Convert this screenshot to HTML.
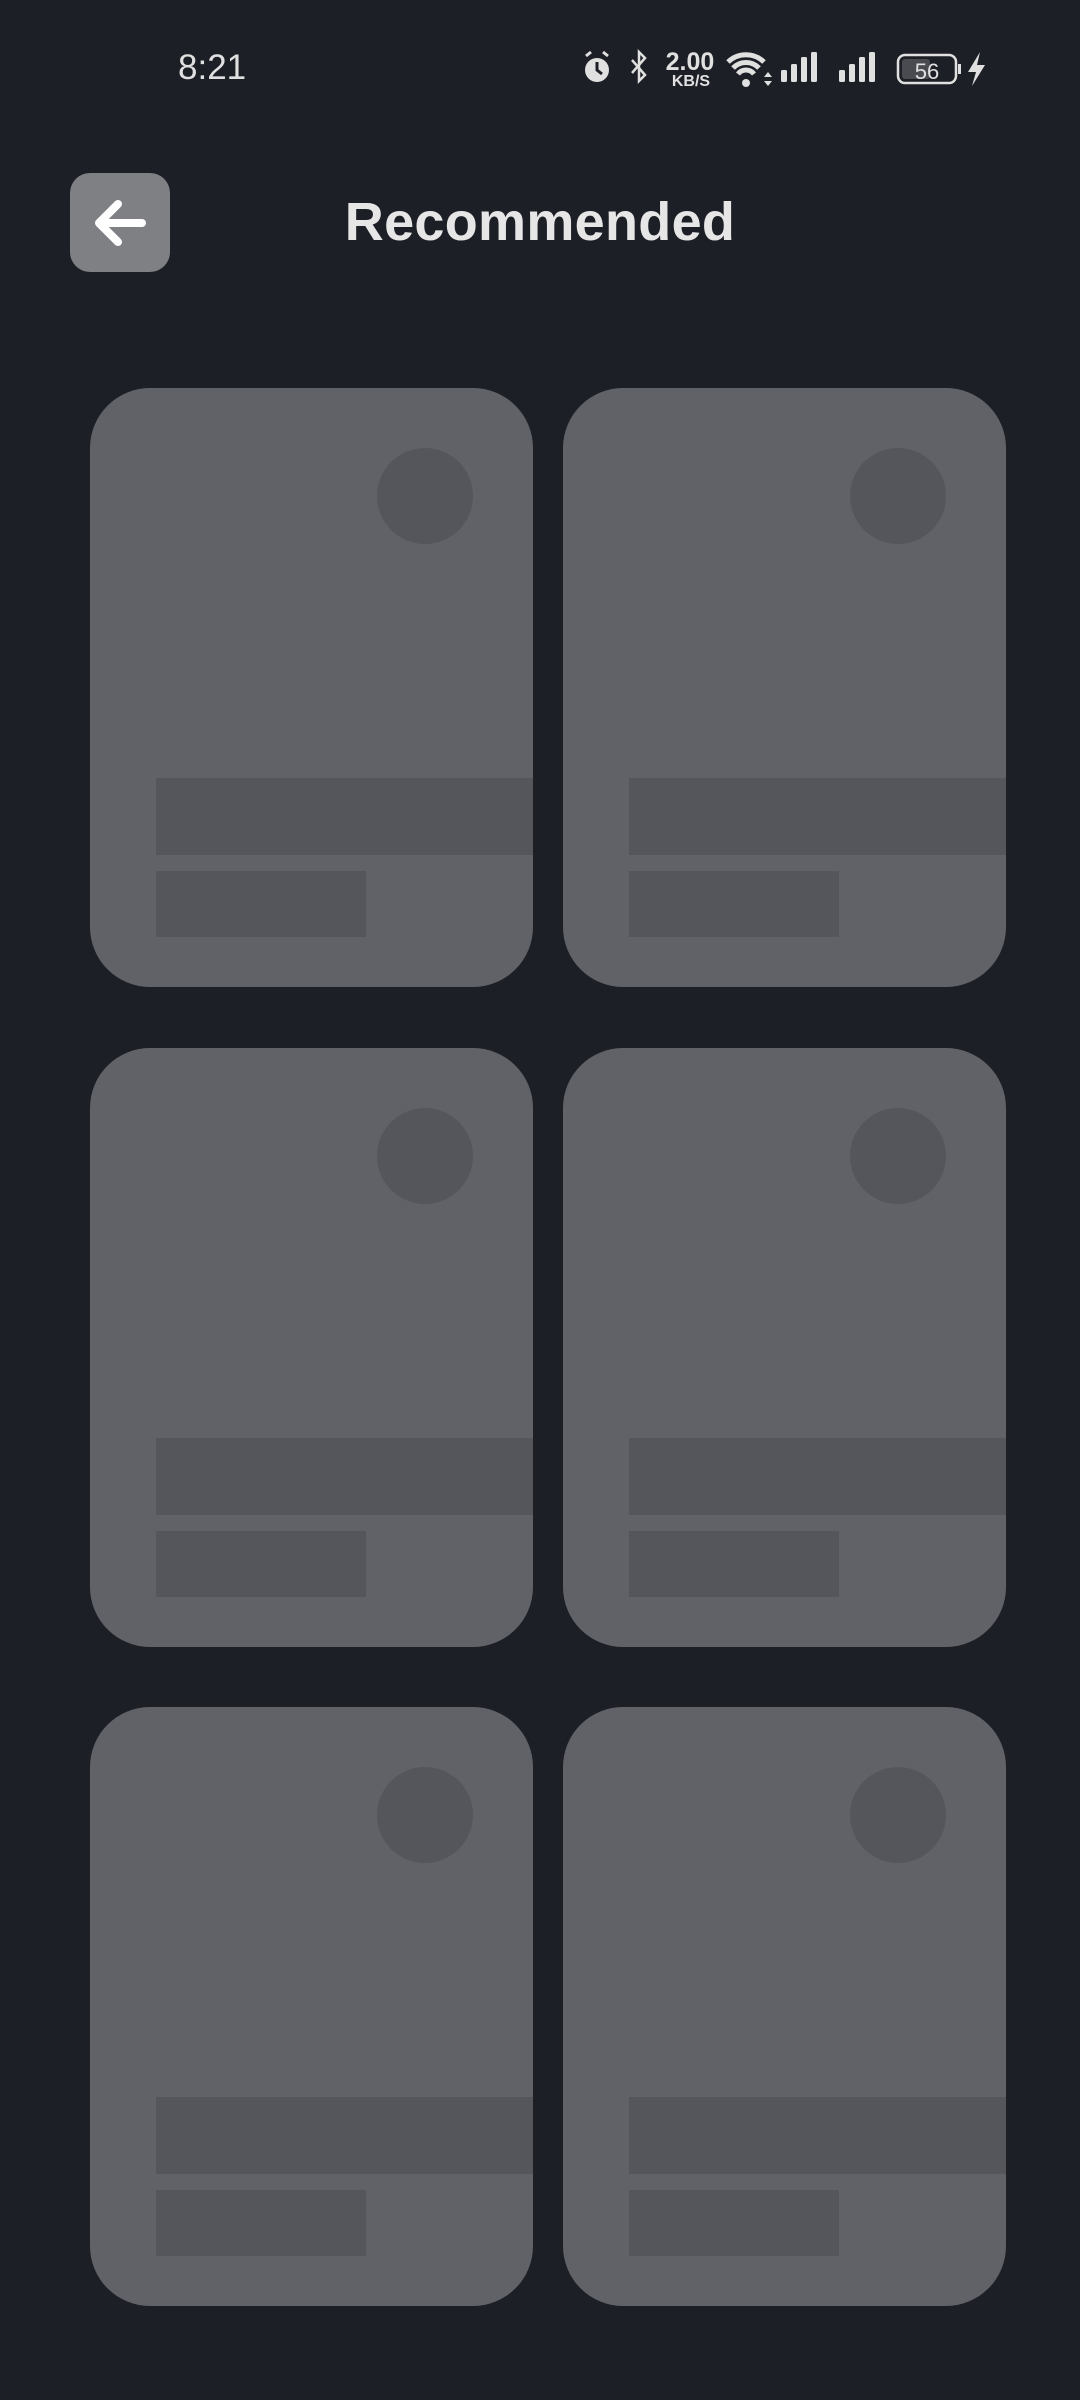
<!DOCTYPE html>
<html><head><meta charset="utf-8"><style>
*{margin:0;padding:0;box-sizing:border-box}
body{width:1080px;height:2400px;background:#1d1f26;position:relative;overflow:hidden;font-family:"Liberation Sans",sans-serif}
.card{position:absolute;width:443px;height:599px;background:#616268;border-radius:60px;overflow:hidden}
.c{position:absolute;left:287px;top:60px;width:96px;height:96px;border-radius:50%;background:#55565b}
.b1{position:absolute;left:66px;top:390px;right:0;height:77px;background:#55565b}
.b2{position:absolute;left:66px;top:483px;width:210px;height:66px;background:#55565b}
.st{position:absolute;color:#e0e0e0}
</style></head><body>
<div class="st" style="left:178px;top:48px;font-size:35px">8:21</div>
<svg style="position:absolute;left:575px;top:45px" width="420" height="48" viewBox="575 45 420 48">
<g fill="#e0e0e0" stroke="#e0e0e0">
<circle cx="597" cy="70" r="12" stroke="none"/>
<path d="M586 56l5-4M608 56l-5-4" stroke-width="3" fill="none"/>
<path d="M597 62v8l5 4" stroke="#1d1f26" stroke-width="3" fill="none"/>
<path d="M632 60l13 15-6 6V52l6 6-13 15" stroke-width="2.5" fill="none"/>
<circle cx="746" cy="83" r="4" stroke="none"/>
<path d="M728 62a26 26 0 0 1 36 0M733 68a18 18 0 0 1 26 0M738 74a10 10 0 0 1 16 0" stroke-width="5" fill="none"/>
<path d="M764 77l4-5 4 5zM764 81l4 5 4-5z" stroke="none"/>
<rect x="781" y="70" width="6" height="12" rx="1.5" stroke="none"/><rect x="791" y="64" width="6" height="18" rx="1.5" stroke="none"/><rect x="801" y="57" width="6" height="25" rx="1.5" stroke="none"/><rect x="811" y="52" width="6" height="30" rx="1.5" stroke="none"/>
<rect x="839" y="70" width="6" height="12" rx="1.5" stroke="none"/><rect x="849" y="64" width="6" height="18" rx="1.5" stroke="none"/><rect x="859" y="57" width="6" height="25" rx="1.5" stroke="none"/><rect x="869" y="52" width="6" height="30" rx="1.5" stroke="none"/>
<rect x="898" y="55" width="58" height="28" rx="7" fill="none" stroke-width="2.5"/>
<rect x="902" y="59" width="28" height="20" rx="3" fill="#4a4b50" stroke="none"/>
<rect x="958" y="64" width="3" height="10" stroke="none"/>
<path d="M980 52l-12 20h8l-4 14 13-21h-8z" stroke="none"/>
</g>
<text x="927" y="79" font-family="Liberation Sans" font-size="22" fill="#e0e0e0" text-anchor="middle">56</text>
<text x="690" y="70" font-family="Liberation Sans" font-size="25" font-weight="bold" fill="#e0e0e0" text-anchor="middle">2.00</text>
<text x="691" y="86" font-family="Liberation Sans" font-size="16" font-weight="bold" fill="#e0e0e0" text-anchor="middle">KB/S</text>
</svg>
<div style="position:absolute;left:70px;top:173px;width:100px;height:99px;background:#7f8084;border-radius:20px"></div>
<svg style="position:absolute;left:70px;top:173px" width="100" height="99" viewBox="70 173 100 99"><path d="M142 223H99M118 204L99 223L118 242" stroke="#fff" stroke-width="8" stroke-linecap="round" stroke-linejoin="round" fill="none"/></svg>
<div style="position:absolute;left:0;width:1080px;top:191px;text-align:center;font-size:54px;font-weight:bold;color:#e6e6e6;letter-spacing:0.3px">Recommended</div>
<div class="card" style="left:90px;top:388px"><div class="c"></div><div class="b1"></div><div class="b2"></div></div>
<div class="card" style="left:563px;top:388px"><div class="c"></div><div class="b1"></div><div class="b2"></div></div>
<div class="card" style="left:90px;top:1048px"><div class="c"></div><div class="b1"></div><div class="b2"></div></div>
<div class="card" style="left:563px;top:1048px"><div class="c"></div><div class="b1"></div><div class="b2"></div></div>
<div class="card" style="left:90px;top:1707px"><div class="c"></div><div class="b1"></div><div class="b2"></div></div>
<div class="card" style="left:563px;top:1707px"><div class="c"></div><div class="b1"></div><div class="b2"></div></div>
</body></html>
